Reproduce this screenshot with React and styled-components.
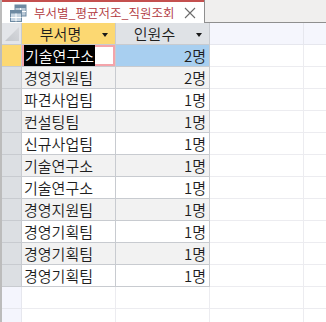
import styled, { createGlobalStyle } from "styled-components"

const GlobalStyle = createGlobalStyle`
    html, body {
        margin: 0;
        padding: 0;
        background: #ffffff;
    }
    body {
        font-family: "Noto Sans CJK KR", "Noto Sans", sans-serif;
    }
`

const rows = [
    { dept: "기술연구소", count: "2명" },
    { dept: "경영지원팀", count: "2명" },
    { dept: "파견사업팀", count: "1명" },
    { dept: "컨설팅팀", count: "1명" },
    { dept: "신규사업팀", count: "1명" },
    { dept: "기술연구소", count: "1명" },
    { dept: "기술연구소", count: "1명" },
    { dept: "경영지원팀", count: "1명" },
    { dept: "경영기획팀", count: "1명" },
    { dept: "경영기획팀", count: "1명" },
    { dept: "경영기획팀", count: "1명" },
]

function QueryIcon(){
    return(
        <svg width="18" height="18" viewBox="0 0 18 18">
            <rect x="6" y="1" width="11" height="11" fill="#b9c8d6" stroke="#6e8aa2" />
            <rect x="6" y="1" width="11" height="3" fill="#6e8aa2" />
            <path d="M6 7.5H17M11.5 4V12" stroke="#ffffff" strokeWidth="1" />
            <rect x="1.5" y="6.5" width="11" height="11" fill="#c9d6e2" stroke="#6e8aa2" />
            <rect x="1.5" y="6.5" width="11" height="3" fill="#6e8aa2" />
            <path d="M1.5 13.5H12.5M7 9.5V17.5" stroke="#ffffff" strokeWidth="1" />
        </svg>
    )
}

function CloseIcon(){
    return(
        <svg width="12" height="12" viewBox="0 0 12 12">
            <path d="M1 1L11 11M11 1L1 11" stroke="#6b6b6b" strokeWidth="1.1" />
        </svg>
    )
}

function Corner(){
    return(
        <svg width="19" height="21" viewBox="0 0 19 21">
            <defs>
                <linearGradient id="cg" x1="1" y1="0" x2="0" y2="1">
                    <stop offset="0" stopColor="#d7d9dd" />
                    <stop offset="1" stopColor="#c4c7cc" />
                </linearGradient>
            </defs>
            <polygon points="17,4 17,18 3,18" fill="url(#cg)" />
        </svg>
    )
}

function App(){
    const emptyCols = [0, 1]
    return(
        <>
            <GlobalStyle />
            <Frame>
                <TabBar>
                    <Tab>
                        <QueryIcon />
                        <TabTitle>부서별_평균저조_직원조회</TabTitle>
                        <CloseIcon />
                    </Tab>
                    <TabFill />
                </TabBar>
                <Sheet>
                    <CornerCell><Corner /></CornerCell>
                    <HeaderCell active>부서명<Arrow /></HeaderCell>
                    <HeaderCell>인원수<Arrow /></HeaderCell>
                    {emptyCols.map(i => <BlankHeader key={i} />)}

                    {rows.map((row, i) => (
                        <Row key={i}>
                            <Selector active={i === 0} />
                            <Cell stripe={i % 2 === 1} focused={i === 0}>
                                {i === 0 ? <Highlight>{row.dept}</Highlight> : row.dept}
                            </Cell>
                            <Cell number stripe={i % 2 === 1} selected={i === 0}>{row.count}</Cell>
                            {emptyCols.map(c => <BlankCell key={c} />)}
                        </Row>
                    ))}

                    {[0, 1].map(i => (
                        <Row key={"e" + i}>
                            <Selector empty />
                            <BlankCell />
                            <BlankCell />
                            {emptyCols.map(c => <BlankCell key={c} />)}
                        </Row>
                    ))}
                </Sheet>
            </Frame>
        </>
    )
}

export default App;


const Frame = styled.div`
    width: 326px;
    height: 322px;
    overflow: hidden;
    box-sizing: border-box;
    border-left: 2px solid #bcbcbc;
    background: #ffffff;
`

const TabBar = styled.div`
    display: flex;
    height: 23px;
`

const Tab = styled.div`
    display: flex;
    align-items: center;
    width: 202px;
    box-sizing: border-box;
    border-top: 2px solid #c4504f;
    padding: 0 8px 0 7px;
    background: #ffffff;

    svg:first-child{
        margin-top: 1px;
    }
`

const TabTitle = styled.div`
    flex: 1;
    margin-left: 7px;
    font-size: 12.5px;
    font-weight: 350;
    line-height: 18px;
    color: #b0363c;
    white-space: nowrap;
`

const TabFill = styled.div`
    flex: 1;
    box-sizing: border-box;
    background: #f0efee;
    border-left: 1px solid #8f8f8f;
    border-bottom: 1px solid #8f8f8f;
`

const Sheet = styled.div`
    display: grid;
    grid-template-columns: 20px 94px 94px 94px 94px;
    grid-auto-rows: 22px;
    font-size: 15px;
    font-weight: 350;
    color: #1e1e1e;
`

const Row = styled.div`
    display: contents;
`

const CornerCell = styled.div`
    box-sizing: border-box;
    background: #e3e5e9;
    border-right: 1px solid #c8cbd0;
    border-bottom: 1px solid #c8cbd0;
    display: flex;
`

const HeaderCell = styled.div`
    position: relative;
    display: flex;
    align-items: center;
    justify-content: center;
    box-sizing: border-box;
    padding-right: 16px;
    background: ${props => props.active ? "#fcd872" : "#dfe2e6"};
    border-right: 1px solid #c8cbd0;
    border-bottom: 1px solid #c8cbd0;
    line-height: 21px;
`

const Arrow = styled.span`
    position: absolute;
    right: 7px;
    top: 10px;
    width: 0;
    height: 0;
    border-left: 3.5px solid transparent;
    border-right: 3.5px solid transparent;
    border-top: 4px solid #1a1a1a;
`

const BlankHeader = styled.div`
    box-sizing: border-box;
    background: #f5f6fd;
    border-right: 1px solid #e6e7ee;
    border-bottom: 1px solid #e6e7ee;
`

const Selector = styled.div`
    box-sizing: border-box;
    background: ${props => props.active ? "#fcd872" : props.empty ? "#f4f5fd" : "#dcdfe3"};
    border-right: 1px solid ${props => props.empty ? "#e6e7ee" : "#c8cbd0"};
    border-bottom: 1px solid ${props => props.empty ? "#e6e7ee" : "#c8cbd0"};
`

const Cell = styled.div`
    display: flex;
    align-items: center;
    justify-content: ${props => props.number ? "flex-end" : "flex-start"};
    box-sizing: border-box;
    padding: 0 3px 0 2px;
    background: ${props => props.selected ? "#a8cff0" : props.stripe ? "#f2f2f2" : "#ffffff"};
    border-right: 1px solid #c8cbd0;
    border-bottom: 1px solid #c8cbd0;
    box-shadow: ${props => props.focused ? "inset 0 0 0 2px #f4a4aa" : "none"};
    line-height: 21px;
    white-space: nowrap;
`

const Highlight = styled.span`
    background: #000000;
    color: #ffffff;
    padding: 0 1px;
`

const BlankCell = styled.div`
    box-sizing: border-box;
    background: #ffffff;
    border-right: 1px solid #ececf0;
    border-bottom: 1px solid #ececf0;
`
